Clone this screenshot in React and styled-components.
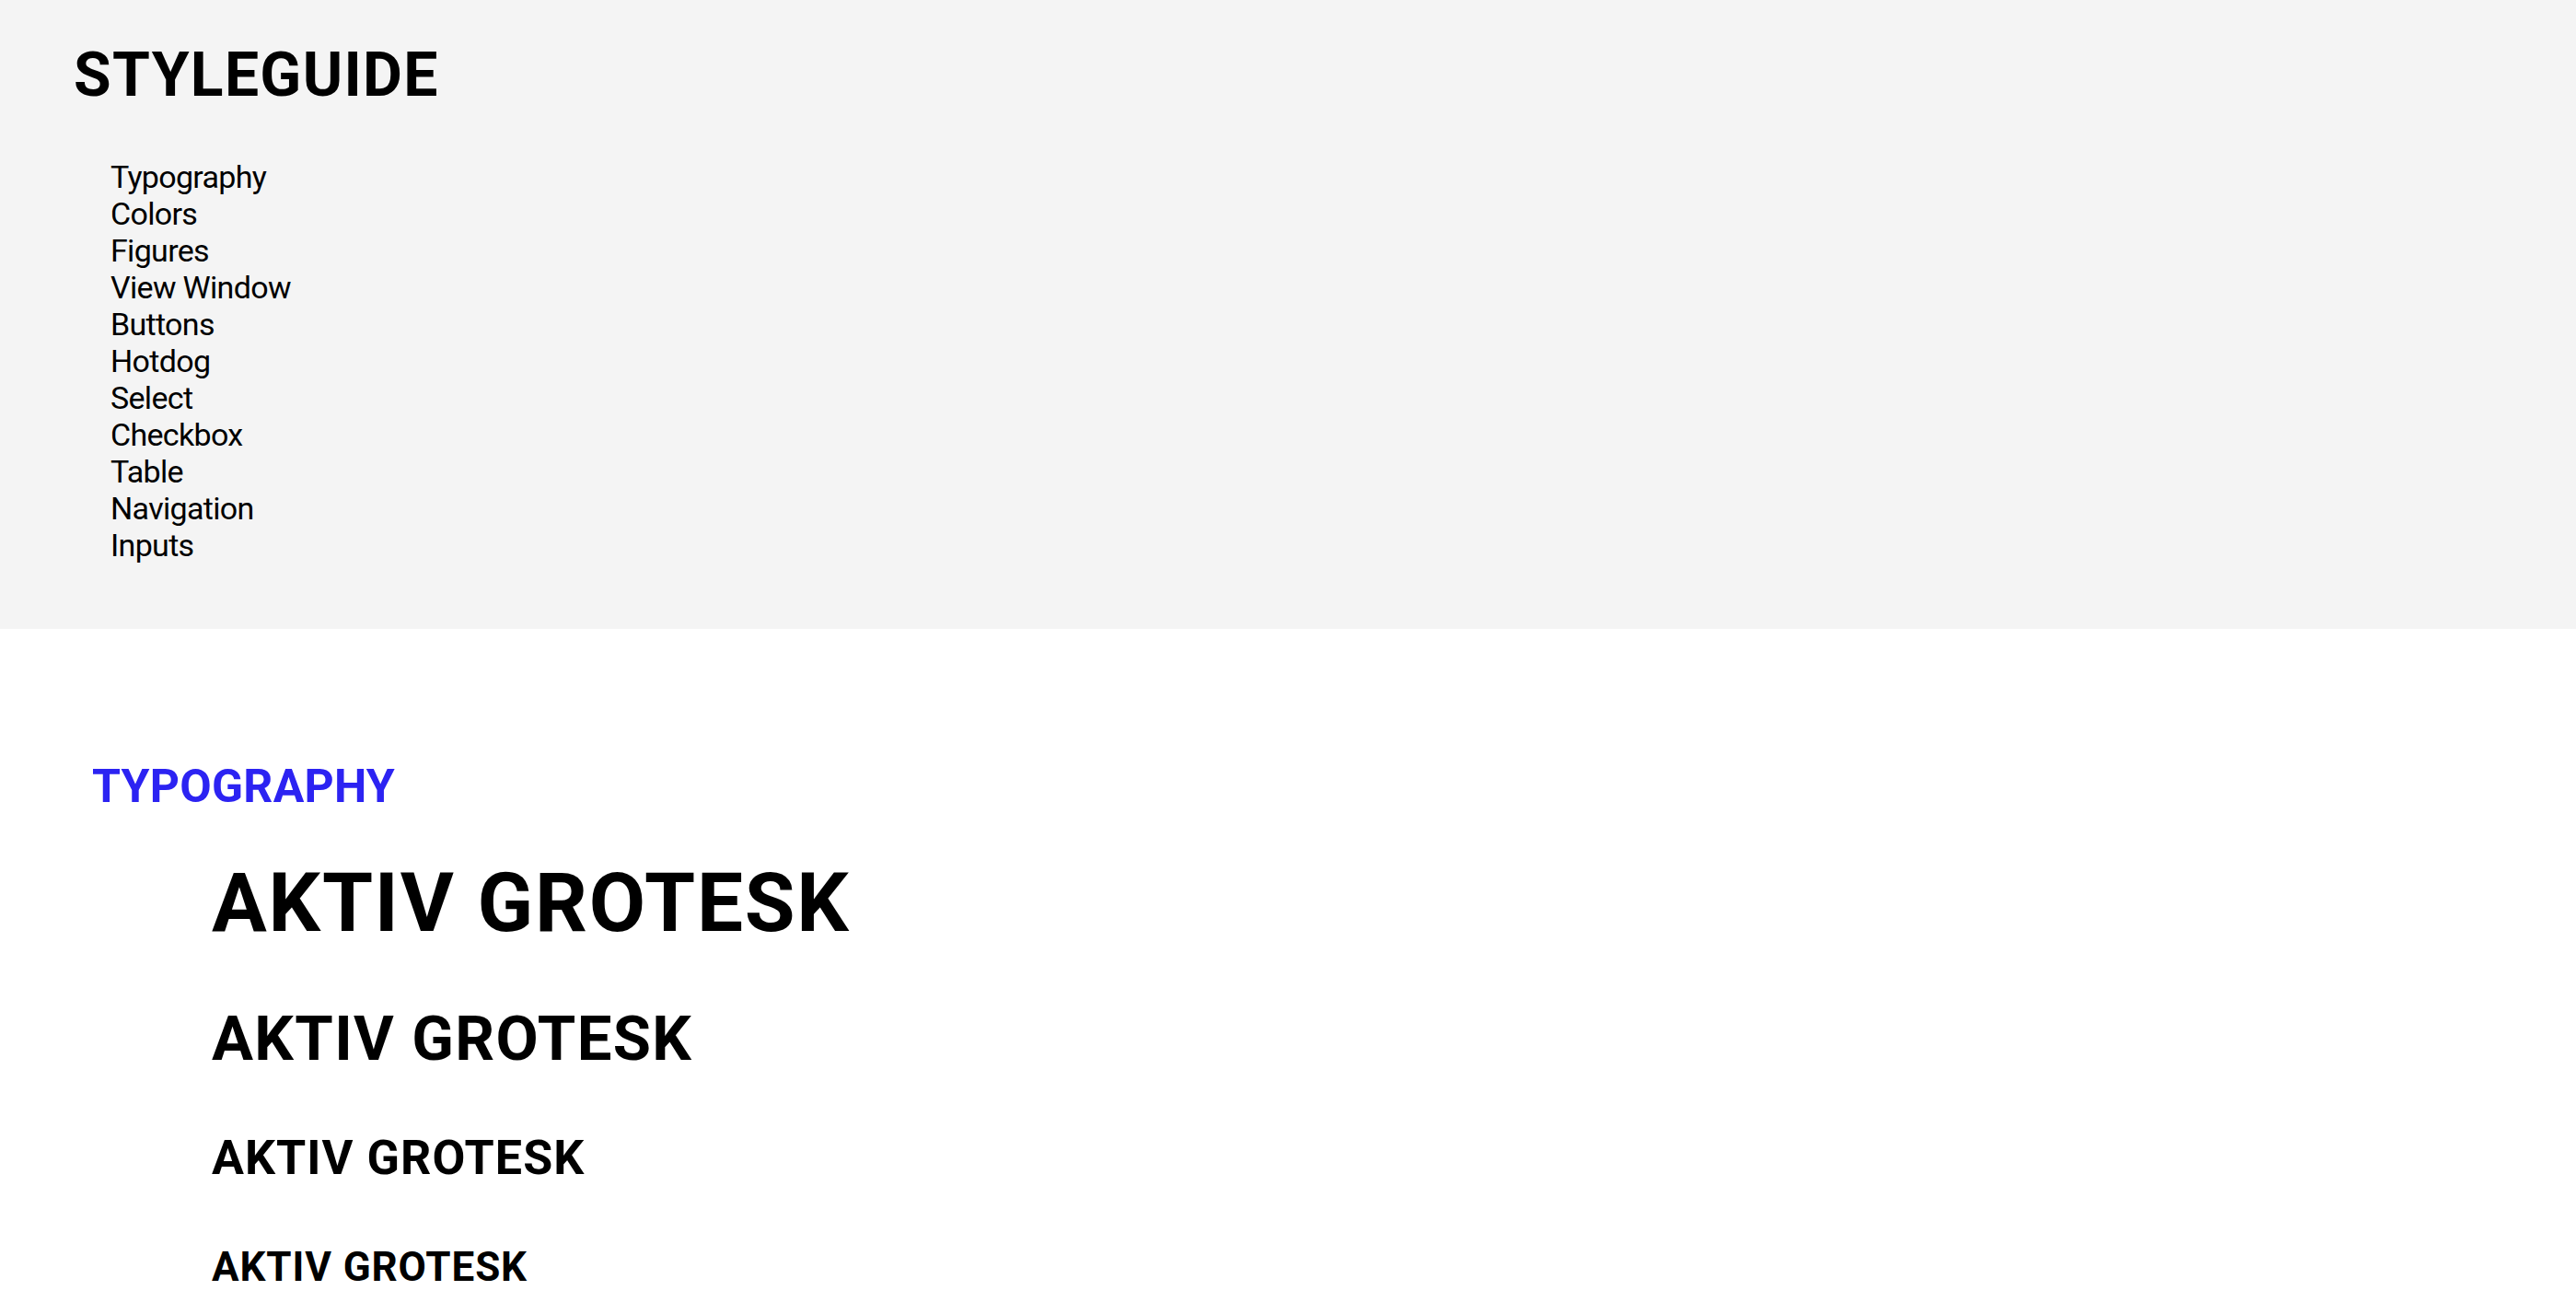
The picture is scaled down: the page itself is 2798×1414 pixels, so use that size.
import React from 'react';
import styled, { createGlobalStyle } from 'styled-components';

const GlobalStyle = createGlobalStyle`
  body {
    margin: 0;
    background: #fff;
    font-family: Roboto, "Liberation Sans", Arial, sans-serif;
    color: #000;
  }
`;

const Header = styled.header`
  background: #f4f4f4;
  padding: 49px 0 71px 80px;
`;

const Title = styled.h1`
  margin: 0;
  font-size: 66px;
  line-height: 1;
  font-weight: 700;
  letter-spacing: 0.02em;
`;

const NavList = styled.ul`
  margin: 57px 0 0;
  padding: 0 0 0 40px;
  list-style: none;
`;

const NavItem = styled.li`
  font-size: 34px;
  line-height: 40px;
  letter-spacing: -0.02em;
`;

const NavLink = styled.a`
  color: #000;
  text-decoration: none;
`;

const Section = styled.section`
  padding: 146px 0 0 100px;
`;

const SectionTitle = styled.h2`
  margin: 0;
  font-size: 50px;
  line-height: 1;
  font-weight: 700;
  letter-spacing: 0.005em;
  color: #2c23f2;
`;

const Samples = styled.div`
  display: flex;
  flex-direction: column;
  align-items: flex-start;
  gap: 70px;
  margin: 57px 0 0 130px;
`;

const Sample = styled.div`
  font-size: ${(p) => p.size}px;
  line-height: 1;
  font-weight: 700;
  letter-spacing: 0.02em;
`;

const links = [
  'Typography',
  'Colors',
  'Figures',
  'View Window',
  'Buttons',
  'Hotdog',
  'Select',
  'Checkbox',
  'Table',
  'Navigation',
  'Inputs',
];

const sizes = [89, 67, 52, 44];

const App = () => {
  return (
    <>
      <GlobalStyle />
      <Header>
        <Title>STYLEGUIDE</Title>
        <NavList>
          {links.map((l) => (
            <NavItem key={l}>
              <NavLink href={`#${l.toLowerCase().replace(' ', '-')}`}>{l}</NavLink>
            </NavItem>
          ))}
        </NavList>
      </Header>
      <Section id="typography">
        <SectionTitle>TYPOGRAPHY</SectionTitle>
        <Samples>
          {sizes.map((s) => (
            <Sample key={s} size={s}>AKTIV GROTESK</Sample>
          ))}
        </Samples>
      </Section>
    </>
  );
};

export default App;
